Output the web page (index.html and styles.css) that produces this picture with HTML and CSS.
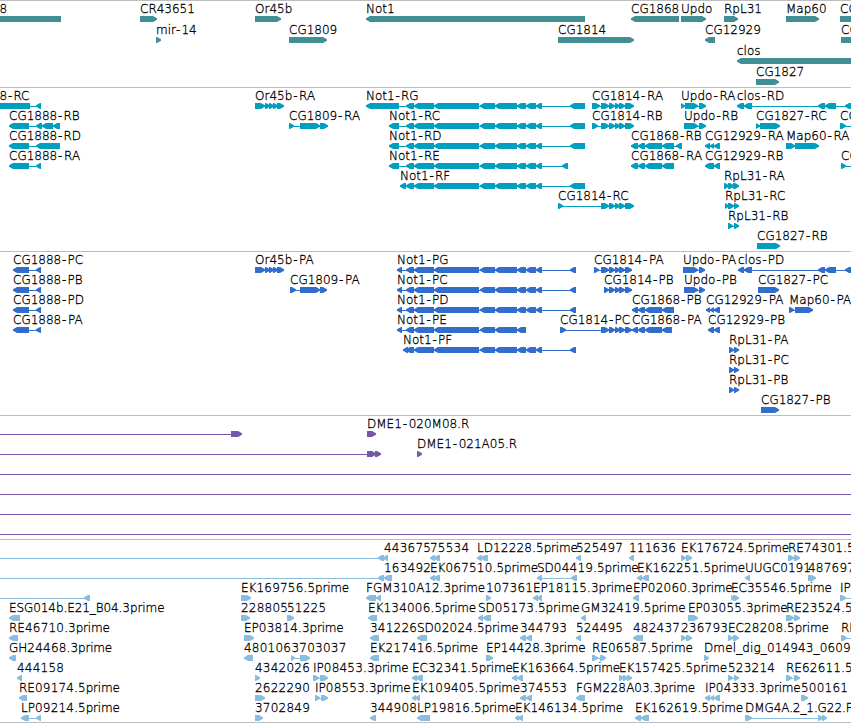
FILE: index.html
```
<!DOCTYPE html>
<html lang="en">
<head>
<meta charset="utf-8">
<title>Genome browser</title>
<link rel="stylesheet" href="styles.css">
</head>
<body>
<main class="browser" id="browser"></main>
<script src="tracks.js"></script>
</body>
</html>
```
FILE: styles.css
```
body {
  margin: 0;
  background: #fff;
  overflow: hidden;
}

.browser {
  display: flex;
  flex-direction: column;
  width: 851px;
  height: 722px;
  border-bottom: 1px solid #bdbdbd;
  overflow: hidden;
}

.track {
  display: flex;
  flex-direction: column;
  flex: none;
  border-top: 1px solid #bdbdbd;
  padding-bottom: 3px;
}

.row {
  display: block;
  width: 851px;
  height: 20px;
  overflow: visible;
}

.row text {
  font-family: "DejaVu Sans", sans-serif;
  font-weight: 200;
  font-size: 12px;
  fill: #000;
  stroke: #000;
  stroke-width: 0.3px;
}

.digits { letter-spacing: 0.22px; }
.suffix { letter-spacing: -0.2px; }
.tight { letter-spacing: -0.08px; }
.wide { letter-spacing: 0.13px; }

.genes { color: #3f8f95; padding-bottom: 2px; }
.genes .row { height: 21px; }
.transcripts { color: #009fc0; }
.proteins { color: #306dcc; }
.bacs { color: #7657a8; }
.ests { color: #88bddf; padding-bottom: 0; }

.exon, .intron { fill: currentColor; }
```
FILE: tracks.js
```
// A feature is [label, label x, strand, exon start, end, start, end, ...]
const OFF = [-40, -30];
const END = [880, 890];
const MID = [406,414, 414,434, 434,479, 480,495, 495,517, 517,526];
const NOT1 = [...MID, 526,536, 536,542];
const CG1814 = [609,615, 615,620, 619,625];
const OR45B = [255,265, 265,270, 269,274, 273,278, 277,284];
const CLOS = [744,752, 818,825, 825,836, 845,860];
const CG1868 = [638,645, 645,662];

const tracks = [
  { name: 'genes', rows: [
    [['8',-.5,'<',-20,61], ['CR43651',140,'>',140,157], ['Or45b',255,'>',255,281], ['Not1',366,'<',366,585],
     ['CG1868',631,'<',631,679], ['Updo',681,'>',681,706], ['RpL31',724,'>',724,738], ['Map60',786,'>',786,819], ['CG',840,'>',840,900]],
    [['mir-14',156,'>',156,161], ['CG1809',289,'>',289,327], ['CG1814',558,'>',558,634], ['CG12929',705,'<',705,715], ['CG',841,'>',841,900]],
    [['clos',737,'<',737,900]],
    [['CG1827',756,'>',756,779]],
  ]},
  { name: 'transcripts', rows: [
    [['8-RC',-.5,'<',-20,30,36,41], ['Or45b-RA',255,'>',...OR45B], ['Not1-RG',366,'<',366,399,...NOT1,570,585],
     ['CG1814-RA',592,'>',592,600,601,609,...CG1814,625,634], ['Updo-RA',681,'>',681,685,685,698,699,706], ['clos-RD',737,'<',737,744,...CLOS]],
    [['CG1888-RB',9,'<',9,29,36,42,42,53,53,60], ['CG1809-RA',289,'>',289,294,300,320,320,328], ['Not1-RC',389,'<',389,399,...NOT1,570,585],
     ['CG1814-RB',592,'>',592,598,601,609,...CG1814,625,634], ['Updo-RB',684,'>',684,698,699,706], ['CG1827-RC',756,'>',756,760,760,780], ['CG',840,'>',840,846,...END]],
    [['CG1888-RD',9,'<',9,29,36,60], ['Not1-RD',389,'<',389,399,...NOT1,570,585], ['CG1868-RB',631,'<',631,638,...CG1868,662,674,676,682],
     ['CG12929-RA',705,'<',705,710,710,714,714,720], ['Map60-RA',786,'>',786,795,795,819]],
    [['CG1888-RA',9,'<',9,29,36,41], ['Not1-RE',389,'<',389,399,...NOT1,562,568], ['CG1868-RA',631,'<',631,638,...CG1868,662,674],
     ['CG12929-RB',705,'<',705,714,714,720], ['CG',841,'>',841,846,...END]],
    [['Not1-RF',400,'<',400,406,...NOT1,570,585], ['RpL31-RA',724,'>',724,729,728,734,733,739]],
    [['CG1814-RC',558,'>',558,563,601,609,...CG1814,625,634], ['RpL31-RC',725,'>',725,729,728,734,734,739]],
    [['RpL31-RB',728,'>',728,733,734,739]],
    [['CG1827-RB',757,'>',757,780]],
  ]},
  { name: 'proteins', rows: [
    [['CG1888-PC',13,'<',13,29,36,41], ['Or45b-PA',255,'>',...OR45B], ['Not1-PG',397,'<',397,402,...NOT1,570,576],
     ['CG1814-PA',594,'>',594,599,601,609,...CG1814,625,632], ['Updo-PA',683,'>',683,698,699,705], ['clos-PD',738,'<',738,744,...CLOS]],
    [['CG1888-PB',13,'<',13,29,36,41], ['CG1809-PA',290,'>',290,296,300,320,320,327], ['Not1-PC',397,'<',397,402,...NOT1,570,576],
     ['CG1814-PB',604,'>',604,609,...CG1814,625,632], ['Updo-PB',684,'>',684,698,699,705], ['CG1827-PC',758,'>',758,779]],
    [['CG1888-PD',13,'<',13,29,36,41], ['Not1-PD',397,'<',397,402,...NOT1,570,576], ['CG1868-PB',632,'<',632,638,...CG1868,662,674],
     ['CG12929-PA',706,'<',706,710,710,714,714,720], ['Map60-PA',789,'>',789,794,795,813]],
    [['CG1888-PA',13,'<',13,29,36,41], ['Not1-PE',397,'<',397,402,...MID], ['CG1814-PC',560,'>',560,566,601,609,...CG1814,625,632],
     ['CG1868-PA',632,'<',632,638,...CG1868,662,672], ['CG12929-PB',708,'<',708,714,714,720]],
    [['Not1-PF',403,'<',403,408,...NOT1,570,576], ['RpL31-PA',729,'>',729,734,734,739]],
    [['RpL31-PC',729,'>',729,734,734,739]],
    [['RpL31-PB',729,'>',729,734,734,739]],
    [['CG1827-PB',761,'>',761,779]],
  ]},
  { name: 'bacs', rows: [
    [['',0,'>',...OFF,231,242], ['DME1-020M08.R',367,'>',367,376]],
    [['',0,'>',...OFF,367,376,375,381], ['DME1-021A05.R',417,'>',417,422]],
    [['',0,'>',...OFF,...END]], [['',0,'>',...OFF,...END]], [['',0,'>',...OFF,...END]], [['',0,'>',...OFF,...END]],
  ]},
  { name: 'ests', rows: [
    [['',0,'<',...OFF,378,384], ['443675',384,'<',383,388], ['75534',430,'<',430,435,434,440], ['LD12228.5prime',477,'<',477,482,481,488],
     ['525497',576,'<',576,581], ['111636',629,'<',629,634], ['EK176724.5prime',681,'>',681,686,686,692], ['RE74301.5prime',788,'>',788,794,794,800]],
    [['',0,'<',...OFF,378,384], ['163492',384,'<',384,392], ['EK067510.5prime',430,'<',430,435,434,440], ['SD04419.5prime',537,'<',537,542,571,577],
     ['EK162251.5prime',637,'<',637,642,642,649], ['UUGC0191',745,'<',745,750], ['487697',808,'>',808,816]],
    [['',0,'<',...OFF,84,90], ['EK169756.5prime',241,'>',241,251], ['FGM310A12.3prime',366,'<',366,376,376,381], ['107361',486,'>',486,491],
     ['EP18115.3prime',533,'<',533,538,537,542], ['EP02060.3prime',633,'<',633,639], ['EC35546.5prime',731,'>',731,734,733,739], ['IP',840,'>',840,846,...END]],
    [['ESG014b.E21_B04.3prime',9,'<',9,20], ['228805',241,'>',241,250], ['51225',287,'>',287,294], ['EK134006.5prime',368,'<',368,377],
     ['SD05173.5prime',478,'<',478,483,483,491], ['GM32419.5prime',581,'<',581,586], ['EP03055.3prime',688,'>',688,698], ['RE23524.5prime',786,'>',786,794,794,800]],
    [['RE46710.3prime',9,'<',9,18], ['EP03814.3prime',244,'>',244,254], ['341226',370,'<',370,379], ['SD02024.5prime',417,'<',417,427],
     ['344793',520,'<',520,526,526,532], ['524495',576,'<',576,581], ['482437',633,'<',633,643], ['236793',681,'>',681,686,686,692],
     ['EC28208.5prime',728,'>',728,733,733,739], ['RE',841,'>',841,847,...END]],
    [['GH24468.3prime',9,'<',9,16], ['480106',244,'<',244,253], ['3703037',291.5,'>',291,295,300,310], ['EK217416.5prime',370,'<',370,379],
     ['EP14428.3prime',486,'>',486,493], ['RE06587.5prime',592,'>',592,598,600,606], ['Dmel_dig_014943_0609',704,'>',704,709]],
    [['444158',17,'<',17,22], ['4342026',255,'>',255,260], ['IP08453.3prime',313,'>',313,319,320,328], ['EC32341.5prime',412,'<',412,417,416,423],
     ['EK163664.5prime',512,'<',512,517,517,523], ['EK157425.5prime',619,'>',619,624,623,628,627,632], ['523214',728,'>',728,733,734,739], ['RE62611.5prime',786,'>',786,792,794,800]],
    [['RE09174.5prime',19,'<',19,27], ['2622290',255,'>',255,265], ['IP08553.3prime',315,'>',315,320,321,328], ['EK109405.5prime',412,'<',412,416,415,420],
     ['374553',520,'<',520,526,526,532], ['FGM228A03.3prime',576,'<',576,585], ['IP04333.3prime',705,'<',705,710,710,714,714,720], ['500161',801,'>',801,808]],
    [['LP09214.5prime',21,'<',21,29,36,41], ['3702849',255,'>',255,263], ['344908',370,'<',370,376], ['LP19816.5prime',417,'<',417,430],
     ['EK146134.5prime',515,'<',515,519,518,523], ['EK162619.5prime',635,'<',635,641,641,649], ['DMG4A.2_1.G22.F',745,'>',745,752,818,823,822,827]],
  ]},
];

function exon(strand, a, b) {
  const head = Math.min(4, b - a);
  return strand === '<'
    ? `<path class="exon" d="M${b} 15H${a + head}L${a} 17.2V18.8L${a + head} 21H${b}Z"/>`
    : `<path class="exon" d="M${a} 15H${b - head}L${b} 17.2V18.8L${b - head} 21H${a}Z"/>`;
}

function markup(label) {
  if (label.startsWith('Dmel')) return `<tspan class="wide">${label}</tspan>`;
  if (label.includes('_')) return `<tspan class="tight">${label}</tspan>`;
  if (label.includes('-')) {
    const after = /A$|\.R$/.test(label) ? 1.6 : 1;
    return label.replace('-', `<tspan dx="0.9">-</tspan><tspan dx="${after}">`) + '</tspan>';
  }
  if (/^\d+$/.test(label)) return `<tspan class="digits">${label}</tspan>`;
  return label.replace(/^(\D+)(\d+)(.*)(prime)$/, '$1<tspan class="digits">$2</tspan>$3<tspan class="suffix">$4</tspan>');
}

function feature([label, x, strand, ...pos]) {
  let out = '';
  if (pos.length > 2) out += `<rect class="intron" x="${pos[0]}" y="18" width="${pos[pos.length - 1] - pos[0]}" height="1"/>`;
  for (let i = 0; i < pos.length; i += 2) out += exon(strand, pos[i], pos[i + 1]);
  return out + (label ? `<text x="${x}" y="12">${markup(label)}</text>` : '');
}

document.getElementById('browser').innerHTML = tracks.map(t =>
  `<section class="track ${t.name}">` +
  t.rows.map(r => `<svg class="row">${r.map(feature).join('')}</svg>`).join('') +
  '</section>').join('');
```
